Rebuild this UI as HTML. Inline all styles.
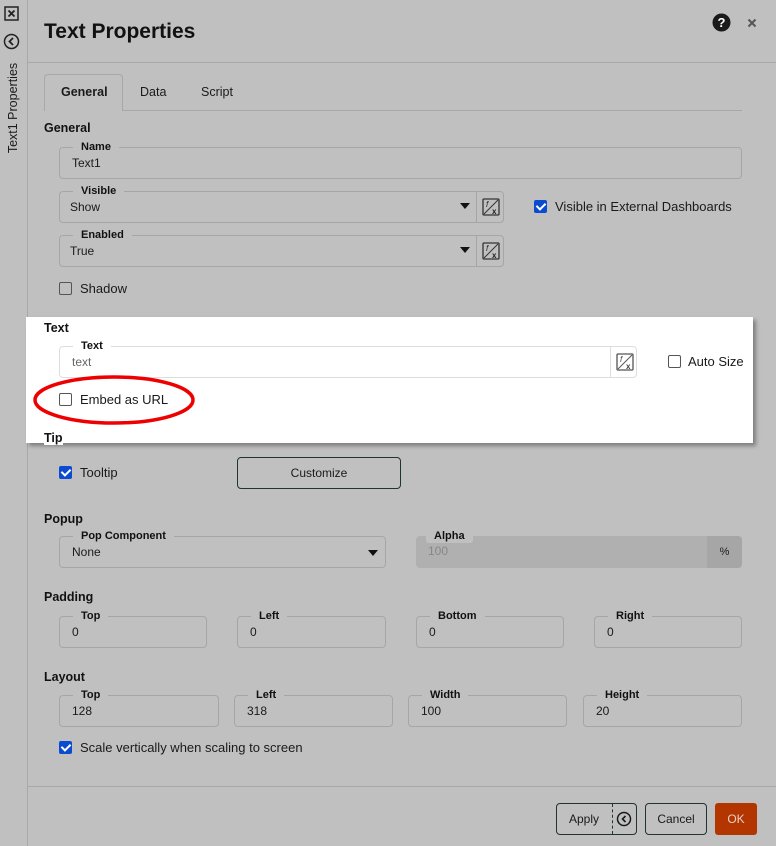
<!DOCTYPE html>
<html><head><meta charset="utf-8"><style>
*{box-sizing:border-box;margin:0;padding:0}
body{width:776px;height:846px;background:#c0c0c0;font-family:"Liberation Sans",sans-serif;color:#1a1a1a;position:relative;overflow:hidden;font-size:12px}
.a{position:absolute}
.f{position:absolute;border:1px solid #a6a6a6;border-radius:4px;height:32px}
.lg{position:absolute;top:-8px;left:13px;padding:0 8px;background:#c0c0c0;font-weight:bold;font-size:11px;line-height:14px;color:#111}
.v{position:absolute;left:12px;top:7px;font-size:12px;line-height:16px}
.h{position:absolute;left:44px;font-weight:bold;font-size:12.5px;color:#111}
.cb{position:absolute;width:13px;height:13px;border:1px solid #555;border-radius:2px;background:transparent}
.cb.on{background:#0b4bd1;border-color:#0b4bd1}
.cb.on:after{content:"";position:absolute;left:3px;top:0px;width:4px;height:7px;border:solid #fff;border-width:0 2px 2px 0;transform:rotate(45deg)}
.lbl{position:absolute;font-size:13px;line-height:14px}
.fx{position:absolute;width:28px;height:32px;border-left:1px solid #a6a6a6}
.fx svg{position:absolute;left:5px;top:7px}
.tri{position:absolute;width:0;height:0;border-left:5px solid transparent;border-right:5px solid transparent;border-top:6px solid #111}
.btn{position:absolute;border:1px solid #1f3530;border-radius:4px;text-align:center;font-size:12px;line-height:30px}
</style></head><body>
<div class="a" style="left:27px;top:0;width:1px;height:846px;background:#a8a8a8"></div>
<svg class="a" style="left:4px;top:6px" width="15" height="15"><rect x="1" y="1" width="13" height="13" fill="none" stroke="#222" stroke-width="1.5"/><path d="M4.5 4.5L10.5 10.5M10.5 4.5L4.5 10.5" stroke="#222" stroke-width="1.8"/></svg>
<svg class="a" style="left:3px;top:33px" width="17" height="17"><circle cx="8.5" cy="8.5" r="7" fill="none" stroke="#222" stroke-width="1.5"/><path d="M10 5L6.5 8.5L10 12" fill="none" stroke="#222" stroke-width="1.8"/></svg>
<div class="a" style="left:-37px;top:100px;width:100px;height:16px;transform:rotate(-90deg);font-size:12.5px;text-align:center;line-height:16px">Text1 Properties</div>
<div class="a" style="left:44px;top:20px;font-size:21px;font-weight:bold;color:#111">Text Properties</div>
<svg class="a" style="left:712px;top:13px" width="19" height="19"><circle cx="9.5" cy="9.5" r="9" fill="#1a1a1a"/><text x="9.5" y="14" font-size="13" font-weight="bold" fill="#fff" text-anchor="middle" font-family="Liberation Sans">?</text></svg>
<svg class="a" style="left:747px;top:18px" width="10" height="10"><path d="M1.5 1.5L8.5 8.5M8.5 1.5L1.5 8.5" stroke="#555" stroke-width="2"/></svg>
<div class="a" style="left:28px;top:62px;width:748px;height:1px;background:#a8a8a8"></div>
<div class="a" style="left:44px;top:110px;width:698px;height:1px;background:#a8a8a8"></div>
<div class="a" style="left:44px;top:74px;width:79px;height:37px;border:1px solid #a8a8a8;border-bottom:none;border-radius:4px 4px 0 0;background:#c0c0c0"></div>
<div class="a" style="left:61px;top:85px;font-weight:bold;font-size:12.5px">General</div>
<div class="a" style="left:140px;top:85px;font-size:12.5px">Data</div>
<div class="a" style="left:201px;top:85px;font-size:12.5px">Script</div>
<div class="h" style="top:121px">General</div>
<div class="f" style="left:59px;top:147px;width:683px"><span class="lg">Name</span><span class="v">Text1</span></div>
<div class="f" style="left:59px;top:191px;width:445px"><span class="lg">Visible</span><span class="v" style="left:10px">Show</span><div class="tri" style="left:400px;top:11px"></div>
<div class="fx" style="left:416px;top:-1px"><svg width="18" height="18"><rect x="1" y="1" width="16" height="16" fill="none" stroke="#333" stroke-width="1.3" rx="1"/><path d="M2 16L16 2" stroke="#333" stroke-width="1"/><text x="4" y="9" font-size="8" font-style="italic" fill="#222">f</text><text x="10" y="16" font-size="8" font-weight="bold" fill="#222">x</text></svg></div></div>
<div class="cb on" style="left:534px;top:200px"></div>
<div class="lbl" style="left:555px;top:200px">Visible in External Dashboards</div>
<div class="f" style="left:59px;top:235px;width:445px"><span class="lg">Enabled</span><span class="v" style="left:10px">True</span><div class="tri" style="left:400px;top:11px"></div>
<div class="fx" style="left:416px;top:-1px"><svg width="18" height="18"><rect x="1" y="1" width="16" height="16" fill="none" stroke="#333" stroke-width="1.3" rx="1"/><path d="M2 16L16 2" stroke="#333" stroke-width="1"/><text x="4" y="9" font-size="8" font-style="italic" fill="#222">f</text><text x="10" y="16" font-size="8" font-weight="bold" fill="#222">x</text></svg></div></div>
<div class="cb" style="left:59px;top:282px"></div>
<div class="lbl" style="left:80px;top:282px">Shadow</div>
<div class="h" style="top:431px">Tip</div>
<div class="a" style="left:26px;top:317px;width:727px;height:126px;background:#fff;box-shadow:3px 3px 4px rgba(0,0,0,0.35)">
 <div class="h" style="left:18px;top:4px">Text</div>
 <div class="f" style="left:33px;top:29px;width:578px;border-color:#ddd"><span class="lg" style="background:#fff">Text</span><span class="v" style="color:#666">text</span>
 <div class="fx" style="left:550px;top:-1px;border-color:#ddd"><svg width="18" height="18"><rect x="1" y="1" width="16" height="16" fill="none" stroke="#555" stroke-width="1.3" rx="1"/><path d="M2 16L16 2" stroke="#555" stroke-width="1"/><text x="4" y="9" font-size="8" font-style="italic" fill="#444">f</text><text x="10" y="16" font-size="8" font-weight="bold" fill="#444">x</text></svg></div></div>
 <div class="cb" style="left:642px;top:38px"></div>
 <div class="lbl" style="left:662px;top:38px">Auto Size</div>
 <div class="cb" style="left:33px;top:76px"></div>
 <div class="lbl" style="left:54px;top:76px">Embed as URL</div>
 <div class="h" style="left:18px;top:114px;background:#fff">Tip</div>
</div>
<svg class="a" style="left:30px;top:370px" width="170" height="60"><ellipse cx="84" cy="30" rx="79" ry="23" fill="none" stroke="#e00" stroke-width="3.5"/></svg>
<div class="cb on" style="left:59px;top:466px"></div>
<div class="lbl" style="left:80px;top:466px">Tooltip</div>
<div class="btn" style="left:237px;top:457px;width:164px;height:32px">Customize</div>
<div class="h" style="top:512px">Popup</div>
<div class="f" style="left:59px;top:536px;width:327px"><span class="lg">Pop Component</span><span class="v">None</span><div class="tri" style="left:308px;top:13px"></div></div>
<div class="a" style="left:416px;top:536px;width:326px;height:32px;background:#b0b0b0;border-radius:4px">
 <span class="lg" style="background:#c0c0c0;border-radius:3px;top:-7px;left:10px">Alpha</span><span class="v" style="color:#888">100</span>
 <div class="a" style="left:291px;top:0;width:35px;height:32px;background:#a6a6a6;border-radius:0 4px 4px 0;text-align:center;line-height:32px;font-size:11px">%</div></div>
<div class="h" style="top:590px">Padding</div>
<div class="f" style="left:59px;top:616px;width:148px"><span class="lg">Top</span><span class="v">0</span></div>
<div class="f" style="left:237px;top:616px;width:149px"><span class="lg">Left</span><span class="v">0</span></div>
<div class="f" style="left:416px;top:616px;width:148px"><span class="lg">Bottom</span><span class="v">0</span></div>
<div class="f" style="left:594px;top:616px;width:148px"><span class="lg">Right</span><span class="v">0</span></div>
<div class="h" style="top:670px">Layout</div>
<div class="f" style="left:59px;top:695px;width:160px"><span class="lg">Top</span><span class="v">128</span></div>
<div class="f" style="left:234px;top:695px;width:159px"><span class="lg">Left</span><span class="v">318</span></div>
<div class="f" style="left:408px;top:695px;width:159px"><span class="lg">Width</span><span class="v">100</span></div>
<div class="f" style="left:583px;top:695px;width:159px"><span class="lg">Height</span><span class="v">20</span></div>
<div class="cb on" style="left:59px;top:741px"></div>
<div class="lbl" style="left:80px;top:741px">Scale vertically when scaling to screen</div>
<div class="a" style="left:28px;top:786px;width:748px;height:1px;background:#a8a8a8"></div>
<div class="btn" style="left:556px;top:803px;width:81px;height:32px;text-align:left;padding-left:12px">Apply
 <div class="a" style="left:55px;top:0;height:30px;border-left:1px dashed #1f3530"></div>
 <svg class="a" style="left:59px;top:7px" width="16" height="16"><circle cx="8" cy="8" r="6.5" fill="none" stroke="#1a1a1a" stroke-width="1.5"/><path d="M9.5 5L6.5 8L9.5 11" fill="none" stroke="#1a1a1a" stroke-width="1.6"/></svg></div>
<div class="btn" style="left:645px;top:803px;width:62px;height:32px">Cancel</div>
<div class="a" style="left:715px;top:803px;width:42px;height:32px;background:#b33600;border-radius:3px;color:#e8d0c8;text-align:center;line-height:32px;font-size:12px">OK</div>
</body></html>
